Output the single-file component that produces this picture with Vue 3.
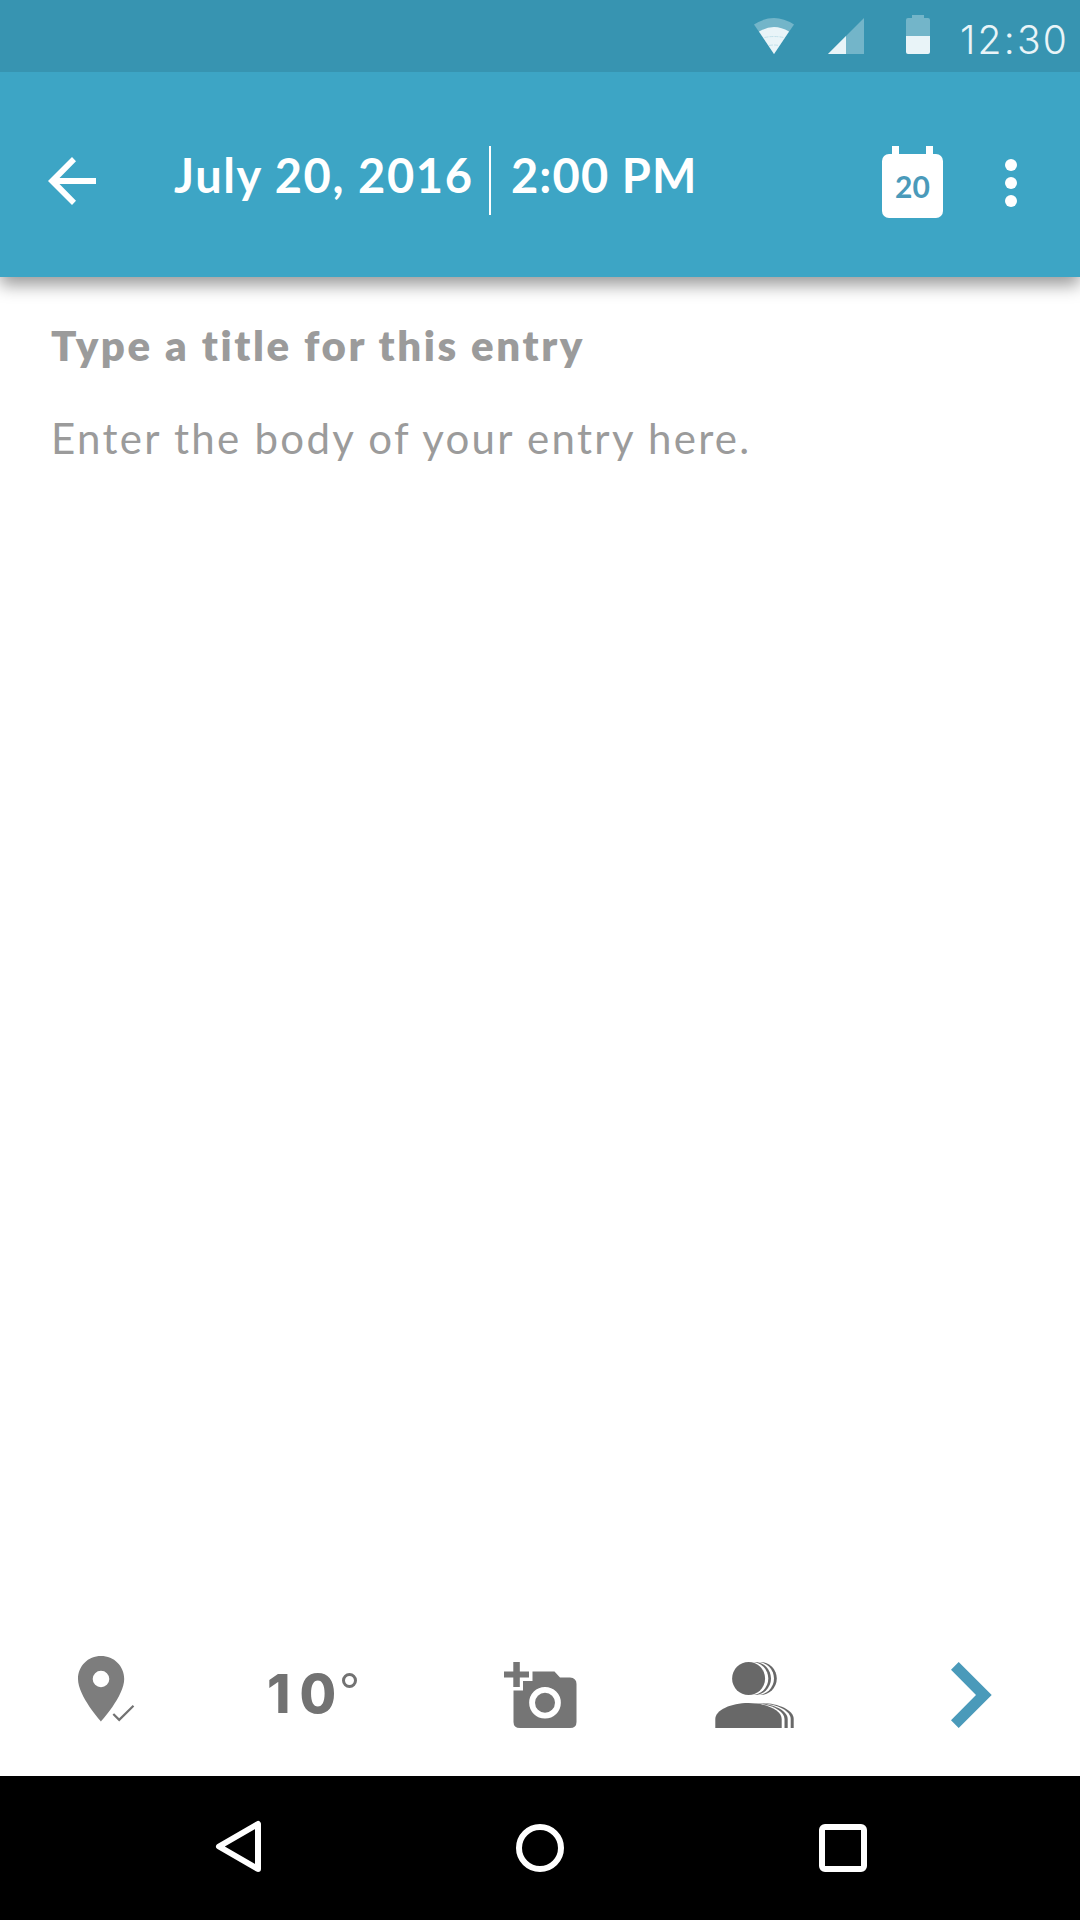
<script setup>
const entry = {
  date: 'July 20, 2016',
  time: '2:00 PM',
  day: '20',
  title: 'Type a title for this entry',
  body: 'Enter the body of your entry here.',
  temperature: '10',
}
</script>

<template>
  <div class="screen">
    <div class="status">
      <svg class="wifi" width="42" height="38" viewBox="753 17 42 38">
        <path d="M774 54 L754 24.500 Q774 11.500 794 24.500 Z" fill="#73b5c9" />
        <path d="M774 54 L759 31.500 Q774 22.500 789 31.500 Z" fill="#e9f4f8" />
        <path d="M764.500 37.500 Q774 35.500 783.500 37.500 M769 45.500 Q774 44.500 779 45.500" fill="none" stroke="#b9dce6" stroke-width="0.8" stroke-dasharray="4 1" />
      </svg>
      <svg class="signal" width="36" height="36" viewBox="828 18 36 36">
        <path d="M864 18 V54 H828 Z" fill="#73b5c9" />
        <path d="M846 36 V54 H828 Z" fill="#e9f4f8" />
      </svg>
      <svg class="battery" width="24" height="39" viewBox="906 15 24 39">
        <path d="M912 15 H924 V18 H928 Q930 18 930 20 V36 H906 V20 Q906 18 908 18 H912 Z" fill="#73b5c9" />
        <path d="M906 36 H930 V52 Q930 54 928 54 H908 Q906 54 906 52 Z" fill="#e9f4f8" />
      </svg>
      <span class="clock">12:30</span>
    </div>

    <header class="bar">
      <svg class="back" width="48" height="48" viewBox="48 157 48 48">
        <path d="M96 178 V184 H59.500 L76 200.800 L72 205 L48 181 L72 157 L76 161.200 L59.500 178 Z" fill="#fff" />
      </svg>
      <span class="date">{{ entry.date }}</span>
      <span class="divider"></span>
      <span class="time">{{ entry.time }}</span>
      <span class="calendar">
        <i class="ring"></i><i class="ring"></i>
        <b class="day">{{ entry.day }}</b>
      </span>
      <span class="more"><i></i><i></i><i></i></span>
    </header>

    <main class="entry">
      <div><span class="title">{{ entry.title }}</span></div>
      <div class="row"><span class="body">{{ entry.body }}</span></div>
    </main>

    <div class="tools">
      <svg class="pin" width="58" height="67" viewBox="77 1655 58 67">
        <path fill-rule="evenodd" d="M101 1656 C88 1656 78 1666 78 1679 C78 1696 101 1721.500 101 1721.500 S124.200 1696 124.200 1679 C124.200 1666 114 1656 101 1656 Z M101 1670.700 A8.300 8.300 0 1 1 101 1687.300 A8.300 8.300 0 1 1 101 1670.700 Z" fill="#7d7d7d" />
        <path d="M113.300 1714 L119.200 1719.900 L133.500 1705.800" fill="none" stroke="#727272" stroke-width="2.200" />
      </svg>
      <span class="temp">{{ entry.temperature }}</span>
      <i class="degree"></i>
      <svg class="camera" width="73" height="66" viewBox="504 1662 73 66">
        <path d="M513.300 1662 H519.800 V1671.500 H529 V1677.500 H519.800 V1687 H513.300 V1677.500 H504 V1671.500 H513.300 Z" fill="#757575" />
        <path fill-rule="evenodd" d="M513.500 1690.500 H523 V1681 H532.500 V1671.500 H554.500 L560 1677.500 H570 Q576.500 1678 576.500 1684 V1722 Q576.500 1728 570 1728 H520 Q513.500 1728 513.500 1722 Z M545 1687 A15.800 15.800 0 1 0 545 1718.600 A15.800 15.800 0 1 0 545 1687 Z" fill="#757575" />
        <circle cx="545" cy="1702.800" r="10" fill="#757575" />
      </svg>
      <svg class="people" width="80" height="66" viewBox="715 1662 80 66">
        <circle cx="760.300" cy="1678.500" r="16.500" fill="#686868" />
        <circle cx="757.500" cy="1678.500" r="16.500" fill="#fff" />
        <circle cx="754.500" cy="1678.500" r="16.500" fill="#686868" />
        <circle cx="751.800" cy="1678.500" r="16.500" fill="#fff" />
        <circle cx="748.600" cy="1678.500" r="16.500" fill="#686868" />
        <g v-for="layer in [[12, '#686868'], [9, '#fff'], [6, '#686868'], [2.8, '#fff'], [0, '#686868']]" :key="layer[0]">
          <path :transform="`translate(${layer[0]} 0)`" :fill="layer[1]" d="M715.300 1728 V1719 C715.300 1710 731 1703 748.500 1703 S781.700 1710 781.700 1719 V1728 Z" />
        </g>
      </svg>
      <svg class="next" width="41" height="66" viewBox="951 1662 41 66">
        <path d="M958.700 1662 L991.700 1695 L958.700 1728 L951 1720.200 L976 1695 L951 1669.700 Z" fill="#4a9aba" />
      </svg>
    </div>

    <nav class="nav">
      <svg width="48" height="54" viewBox="215 1820 48 54">
        <path d="M258 1824 V1869 L219 1846.500 Z" fill="none" stroke="#fff" stroke-width="6" stroke-linejoin="round" />
      </svg>
      <i class="home"></i>
      <i class="recent"></i>
    </nav>
  </div>
</template>

<style>
body {
  margin: 0;
  background: #fff;
}
</style>

<style scoped>
.screen {
  width: 1080px;
  height: 1920px;
  display: flex;
  flex-direction: column;
  overflow: hidden;
  background: #fff;
  font-family: Lato, "Open Sans", sans-serif;
  white-space: nowrap;
}
svg,
i,
b {
  display: block;
  flex: none;
}
.status {
  box-sizing: border-box;
  position: relative;
  z-index: 1;
  height: 72px;
  display: flex;
  align-items: flex-start;
  background: #3794b1;
}
.wifi { margin: 17px 0 0 753px; }
.signal { margin: 18px 0 0 33px; }
.battery { margin: 15px 0 0 42px; }
.clock {
  margin: 16px 0 0 30px;
  font-family: Inter, sans-serif;
  font-size: 39px;
  font-weight: 350;
  line-height: 48px;
  letter-spacing: 2.200px;
  color: #e9f4f8;
}
.bar {
  box-sizing: border-box;
  height: 205px;
  padding-top: 74px;
  display: flex;
  align-items: flex-start;
  flex: none;
  background: #3da5c5;
  color: #fff;
  box-shadow: 0 8px 16px rgba(0, 0, 0, 0.4);
}
.back { margin: 11px 0 0 48px; }
.date,
.time {
  margin-top: 1px;
  font-size: 47px;
  line-height: 56px;
  font-weight: 700;
}
.date {
  width: 315px;
  margin-left: 78px;
  letter-spacing: 1.600px;
}
.divider {
  width: 1.5px;
  height: 69px;
  background: #fff;
}
.time {
  width: 371px;
  margin-left: 20.500px;
  letter-spacing: 1.100px;
}
.calendar {
  width: 61px;
  height: 64.500px;
  margin-top: 7.500px;
  border-radius: 7px;
  background: #fff;
  display: flex;
  flex-wrap: wrap;
  justify-content: space-between;
  align-content: flex-start;
  box-sizing: border-box;
  padding: 0 10px;
}
.ring {
  width: 7px;
  height: 10px;
  margin-top: -7.500px;
  background: #fff;
}
.day {
  width: 41px;
  margin-top: 12px;
  text-align: center;
  font-size: 30px;
  line-height: 36px;
  font-weight: 700;
  color: #4a9aba;
}
.more {
  margin: 13px 0 0 62px;
  display: flex;
  flex-direction: column;
  gap: 6px;
}
.more i {
  width: 12px;
  height: 12px;
  border-radius: 50%;
  background: #fff;
}
.entry {
  flex: 1;
  padding: 44px 0 0 51px;
  font-size: 42px;
  line-height: 48px;
  color: #9b9b9b;
}
.title {
  font-weight: 800;
  letter-spacing: 2.580px;
}
.row { margin-top: 45px; }
.body { letter-spacing: 2.300px; }
.tools {
  height: 121px;
  display: flex;
  align-items: flex-start;
}
.pin { margin-left: 77px; }
.temp {
  width: 75px;
  margin: 9px 0 0 132px;
  font-family: Inter, sans-serif;
  font-size: 53px;
  line-height: 60px;
  font-weight: 800;
  letter-spacing: 9px;
  color: #727272;
}
.degree {
  box-sizing: border-box;
  width: 15px;
  height: 15px;
  margin-top: 18px;
  border: 3px solid #727272;
  border-radius: 50%;
}
.camera { margin: 7px 0 0 147px; }
.people { margin: 7px 0 0 138px; }
.next { margin: 7px 0 0 156px; }
.nav {
  height: 144px;
  display: flex;
  align-items: center;
  background: #000;
}
.nav svg { margin: -2px 0 0 215px; }
.home,
.recent {
  box-sizing: border-box;
  width: 48px;
  height: 48px;
  border: 6px solid #fff;
}
.home {
  margin-left: 253px;
  border-radius: 50%;
}
.recent {
  margin-left: 255px;
  border-radius: 6px;
}
</style>
